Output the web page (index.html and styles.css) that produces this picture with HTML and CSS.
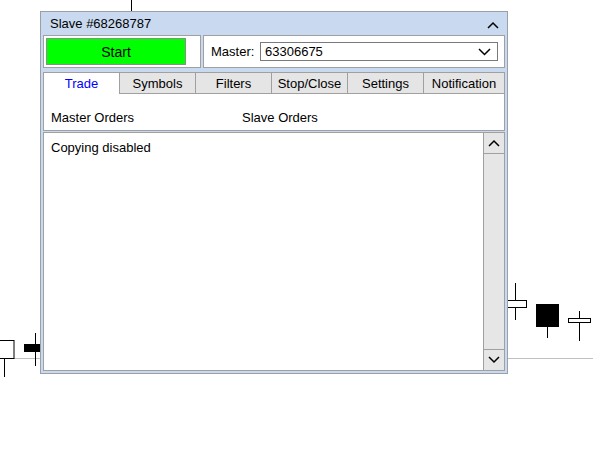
FILE: index.html
```html
<!DOCTYPE html>
<html>
<head>
<meta charset="utf-8">
<link rel="stylesheet" href="styles.css">
</head>
<body>
<svg class="chart" width="593" height="474" viewBox="0 0 593 474">
  <line x1="131.5" y1="0" x2="131.5" y2="11" stroke="#000"/>
  <line x1="0" y1="358.5" x2="40" y2="358.5" stroke="#c0c0c0"/>
  <line x1="507" y1="358.5" x2="593" y2="358.5" stroke="#c0c0c0"/>
  <line x1="4.5" y1="358" x2="4.5" y2="377" stroke="#000"/>
  <rect x="-1" y="340.5" width="15" height="18" fill="#fff" stroke="#000"/>
  <line x1="35.5" y1="333" x2="35.5" y2="366" stroke="#000"/>
  <rect x="24" y="344" width="17" height="8" fill="#000"/>
  <line x1="515.5" y1="283" x2="515.5" y2="320" stroke="#000"/>
  <rect x="507.5" y="300.5" width="19" height="7" fill="#fff" stroke="#000"/>
  <line x1="547.5" y1="326" x2="547.5" y2="338" stroke="#000"/>
  <rect x="536" y="304" width="23" height="23" fill="#000"/>
  <line x1="579.5" y1="311" x2="579.5" y2="341" stroke="#000"/>
  <rect x="568.5" y="318.5" width="22" height="4" fill="#fff" stroke="#000"/>
</svg>

<div class="panel">
  <div class="titlebar">
    <span class="title">Slave #68268787</span>
    <svg class="chev" width="12" height="8" viewBox="0 0 12 8"><path d="M1 7 L6 2 L11 7" fill="none" stroke="#000" stroke-width="1.5"/></svg>
  </div>
  <div class="toprow">
    <div class="box startbox">
      <div class="startbtn">Start</div>
    </div>
    <div class="box masterbox">
      <span class="mlabel">Master:</span>
      <div class="select">
        <span>63306675</span>
        <svg width="13" height="8" viewBox="0 0 13 8"><path d="M1 1 L6.5 6.5 L12 1" fill="none" stroke="#000" stroke-width="1.5"/></svg>
      </div>
    </div>
  </div>
  <div class="tabbox">
    <div class="tabs">
      <div class="tab active">Trade</div>
      <div class="tab">Symbols</div>
      <div class="tab">Filters</div>
      <div class="tab">Stop/Close</div>
      <div class="tab">Settings</div>
      <div class="tab last">Notification</div>
    </div>
    <div class="tabbody">
      <span class="col1">Master Orders</span>
      <span class="col2">Slave Orders</span>
    </div>
  </div>
  <div class="list">
    <div class="listtext">Copying disabled</div>
    <div class="scroll">
      <div class="sbtn"><svg width="12" height="8" viewBox="0 0 12 8"><path d="M1 7 L6 2 L11 7" fill="none" stroke="#000" stroke-width="1.5"/></svg></div>
      <div class="strack"></div>
      <div class="sbtn"><svg width="12" height="8" viewBox="0 0 12 8"><path d="M1 1 L6 6 L11 1" fill="none" stroke="#000" stroke-width="1.5"/></svg></div>
    </div>
  </div>
</div>
</body>
</html>
```
FILE: styles.css
```css
html, body {
  margin: 0;
  padding: 0;
  background: #fff;
  width: 593px;
  height: 474px;
  overflow: hidden;
  font-family: "Liberation Sans", Arial, sans-serif;
  font-size: 13px;
  color: #000;
}
body { position: relative; }
.chart { position: absolute; left: 0; top: 0; }

.panel {
  position: absolute;
  left: 40px;
  top: 11px;
  width: 466px;
  height: 361px;
  border: 1px solid #9aa0a8;
  background: #c9daf0;
  display: flex;
  flex-direction: column;
}
.titlebar {
  height: 23px;
  display: flex;
  align-items: center;
  justify-content: space-between;
  padding: 0 8px 0 9px;
}
.title { font-size: 13px; }
.chev { display: block; margin-top: 2px; }

.toprow {
  display: flex;
  gap: 2px;
  padding: 0 2px;
  height: 33px;
}
.box {
  box-sizing: border-box;
  border: 1px solid #a0a0a0;
  background: #fff;
  height: 33px;
}
.startbox {
  width: 158px;
  padding: 2px;
}
.startbtn {
  box-sizing: border-box;
  width: 140px;
  height: 27px;
  border: 1px solid #8c8c8c;
  background: #00ff00;
  display: flex;
  align-items: center;
  justify-content: center;
  font-size: 14px;
}
.masterbox {
  flex: 1;
  display: flex;
  align-items: center;
  padding: 0 6px 0 7px;
}
.mlabel { width: 49px; }
.select {
  box-sizing: border-box;
  flex: 1;
  height: 19px;
  border: 1px solid #7a7a7a;
  display: flex;
  align-items: center;
  justify-content: space-between;
  padding: 0 6px 0 4px;
}
.select svg { display: block; margin-top: 1px; }

.tabbox {
  margin: 4px 2px 0;
  height: 59px;
  box-sizing: border-box;
  border: 1px solid #a0a0a0;
  border-top: none;
  background: #fff;
  display: flex;
  flex-direction: column;
}
.tabs {
  display: flex;
  height: 22px;
}
.tab {
  box-sizing: border-box;
  width: 76px;
  height: 22px;
  background: #e5e5e5;
  border-top: 1px solid #a0a0a0;
  border-left: 1px solid #a0a0a0;
  border-bottom: 1px solid #a0a0a0;
  display: flex;
  align-items: center;
  justify-content: center;
}
.tab:first-child { border-left: none; width: 75px; }
.tab.last { flex: 1; }
.tab.active {
  background: #fff;
  color: #0000ff;
  border-bottom: none;
}
.tabbody {
  flex: 1;
  display: flex;
  align-items: center;
  padding: 10px 0 0 7px;
}
.col1 { width: 191px; }

.list {
  margin: 1px 2px 0;
  height: 239px;
  box-sizing: border-box;
  border: 1px solid #a0a0a0;
  background: #fff;
  display: flex;
}
.listtext {
  flex: 1;
  padding: 7px 0 0 7px;
}
.scroll {
  width: 21px;
  box-sizing: border-box;
  border-left: 1px solid #a0a0a0;
  background: #e6e6e6;
  display: flex;
  flex-direction: column;
}
.sbtn {
  height: 21px;
  box-sizing: border-box;
  display: flex;
  align-items: center;
  justify-content: center;
}
.sbtn:first-child { border-bottom: 1px solid #a0a0a0; }
.sbtn:last-child { border-top: 1px solid #a0a0a0; }
.strack { flex: 1; }
```
